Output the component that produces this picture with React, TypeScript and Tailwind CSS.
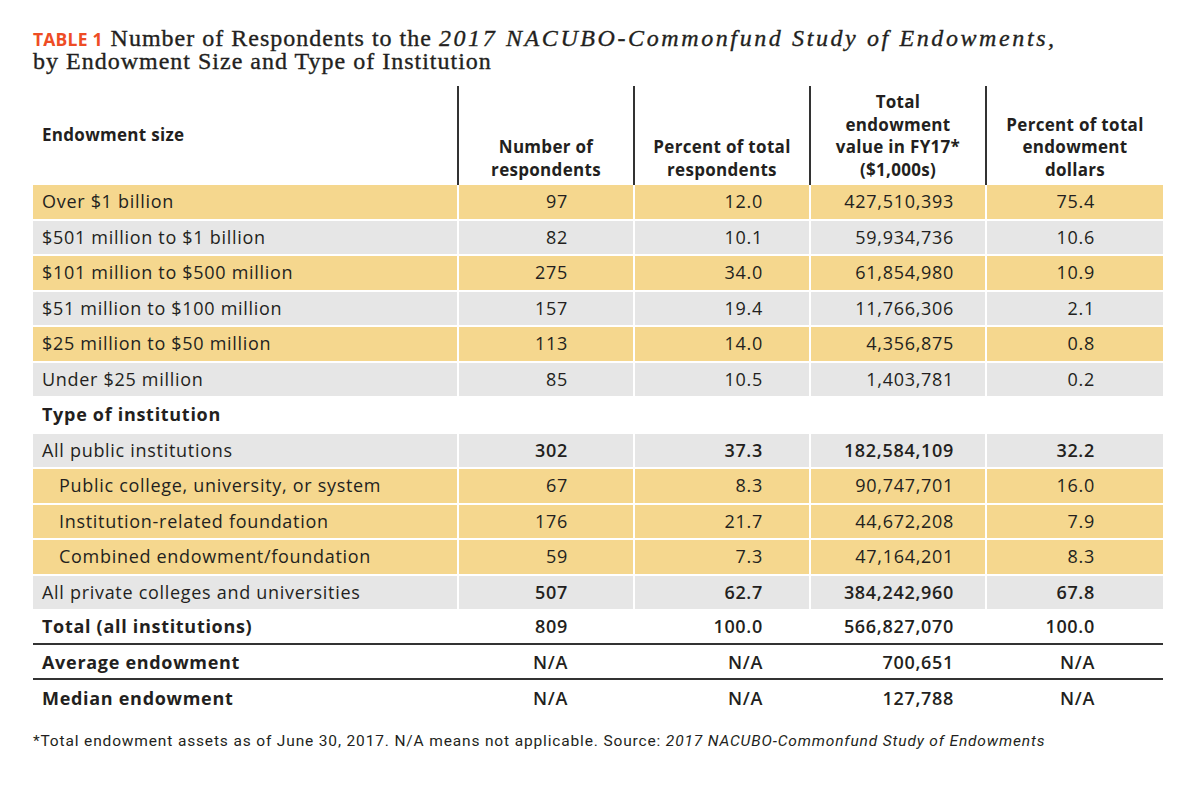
import React from "react";

type Row = {
  label: string;
  values?: string[];
  bg?: "yellow" | "gray" | "none";
  indent?: boolean;
  boldLabel?: boolean;
  boldValues?: boolean;
  ruleBelow?: boolean;
};

const rows: Row[] = [
  { label: "Over $1 billion", values: ["97", "12.0", "427,510,393", "75.4"], bg: "yellow" },
  { label: "$501 million to $1 billion", values: ["82", "10.1", "59,934,736", "10.6"], bg: "gray" },
  { label: "$101 million to $500 million", values: ["275", "34.0", "61,854,980", "10.9"], bg: "yellow" },
  { label: "$51 million to $100 million", values: ["157", "19.4", "11,766,306", "2.1"], bg: "gray" },
  { label: "$25 million to $50 million", values: ["113", "14.0", "4,356,875", "0.8"], bg: "yellow" },
  { label: "Under $25 million", values: ["85", "10.5", "1,403,781", "0.2"], bg: "gray" },
  { label: "Type of institution", bg: "none", boldLabel: true },
  { label: "All public institutions", values: ["302", "37.3", "182,584,109", "32.2"], bg: "gray", boldValues: true },
  { label: "Public college, university, or system", values: ["67", "8.3", "90,747,701", "16.0"], bg: "yellow", indent: true },
  { label: "Institution-related foundation", values: ["176", "21.7", "44,672,208", "7.9"], bg: "yellow", indent: true },
  { label: "Combined endowment/foundation", values: ["59", "7.3", "47,164,201", "8.3"], bg: "yellow", indent: true },
  { label: "All private colleges and universities", values: ["507", "62.7", "384,242,960", "67.8"], bg: "gray", boldValues: true },
  { label: "Total (all institutions)", values: ["809", "100.0", "566,827,070", "100.0"], bg: "none", boldLabel: true, boldValues: true, ruleBelow: true },
  { label: "Average endowment", values: ["N/A", "N/A", "700,651", "N/A"], bg: "none", boldLabel: true, boldValues: true, ruleBelow: true },
  { label: "Median endowment", values: ["N/A", "N/A", "127,788", "N/A"], bg: "none", boldLabel: true, boldValues: true },
];

// right padding of each number column
const valuePad = ["pr-[65px]", "pr-[46px]", "pr-[31px]", "pr-[68px]"];

const bgClass = (bg?: Row["bg"]) =>
  bg === "yellow" ? "bg-[#f5d78e]" : bg === "gray" ? "bg-[#e6e6e6]" : "";

const cols = "grid grid-cols-[424px_174px_174px_174px_176px] gap-x-[2px]";

const App: React.FC = () => {
  return (
    <div
      className="min-h-[791px] w-[1200px] bg-white pl-[33px] text-[#231f20]"
      style={{ fontFamily: "'Open Sans', 'Noto Sans', sans-serif" }}
    >
      <h1
        className="pt-[27px] text-[24px] leading-[22px] font-normal tracking-[1px] [-webkit-text-stroke:0.35px_#231f20]"
        style={{ fontFamily: "'Liberation Serif', serif" }}
      >
        <span
          className="mr-[8px] text-[17.5px] font-bold tracking-[0.2px] text-[#ee4c24] [-webkit-text-stroke:0px]"
          style={{ fontFamily: "'Open Sans', sans-serif" }}
        >
          TABLE 1
        </span>
        Number of Respondents to the{" "}
        <span className="italic tracking-[2.6px]">2017 NACUBO-Commonfund Study of Endowments,</span>
        <br />
        by Endowment Size and Type of Institution
      </h1>

      <div className="mt-[14px] w-[1130px]">
        {/* header */}
        <div className={`${cols} h-[99px] text-[17px] leading-[22.5px] font-bold tracking-[0.3px]`}>
          <div className="flex items-center pl-[9px]">Endowment size</div>
          <div className="-ml-[2px] flex items-end justify-center border-l-2 border-[#333] pb-[4px] text-center">
            Number of
            <br />
            respondents
          </div>
          <div className="-ml-[2px] flex items-end justify-center border-l-2 border-[#333] pb-[4px] text-center">
            Percent of total
            <br />
            respondents
          </div>
          <div className="-ml-[2px] flex items-end justify-center border-l-2 border-[#333] pb-[4px] text-center">
            Total
            <br />
            endowment
            <br />
            value in FY17*
            <br />
            ($1,000s)
          </div>
          <div className="-ml-[2px] flex items-end justify-center border-l-2 border-[#333] pb-[4px] text-center">
            Percent of total
            <br />
            endowment
            <br />
            dollars
          </div>
        </div>

        {/* body */}
        <div className="flex flex-col gap-y-[2px] text-[18px] tracking-[0.7px]">
          {rows.map((row, i) => (
            <div
              key={i}
              className={`${cols} h-[33.5px] ${row.ruleBelow ? "border-b-2 border-[#333]" : ""}`}
            >
              <div
                className={`flex items-center ${bgClass(row.bg)} ${row.indent ? "pl-[26px]" : "pl-[9px]"} ${row.boldLabel ? "font-bold" : ""}`}
              >
                {row.label}
              </div>
              {[0, 1, 2, 3].map((c) => (
                <div
                  key={c}
                  className={`flex items-center justify-end ${bgClass(row.bg)} ${valuePad[c]} ${row.boldValues ? "font-semibold" : ""}`}
                >
                  {row.values ? row.values[c] : ""}
                </div>
              ))}
            </div>
          ))}
        </div>
      </div>

      <p
        className="mt-[15px] text-[15.5px] leading-[20px] tracking-[0.85px] text-[#231f20]"
        style={{ fontFamily: "'Roboto', sans-serif" }}
      >
        *Total endowment assets as of June 30, 2017. N/A means not applicable. Source:{" "}
        <span className="italic">2017 NACUBO-Commonfund Study of Endowments</span>
      </p>
    </div>
  );
};

export default App;
